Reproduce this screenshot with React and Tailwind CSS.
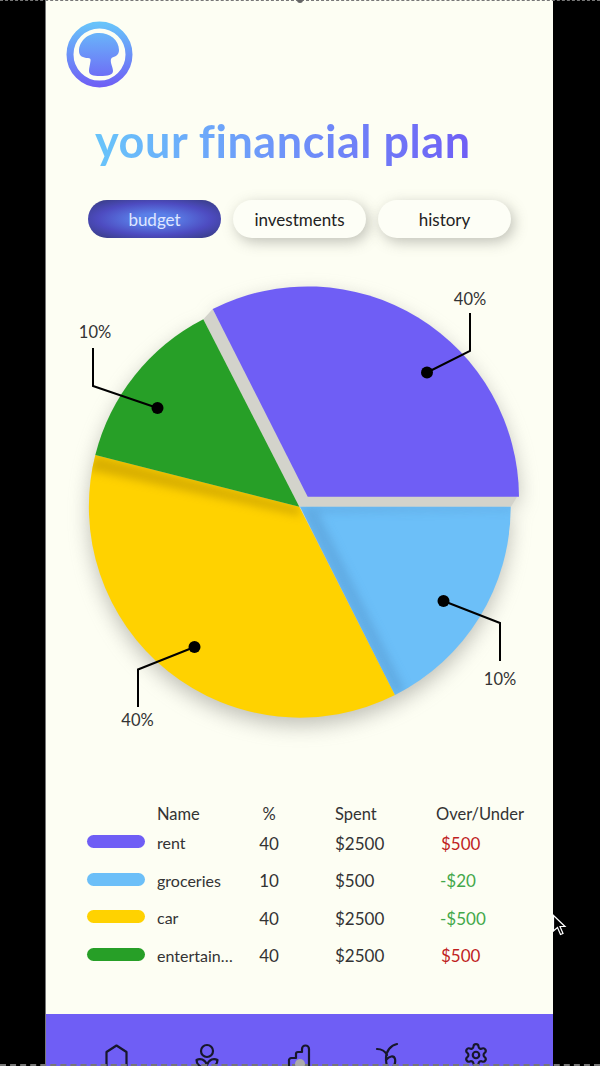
import React from "react";
import { Settings } from "lucide-react";

const PURPLE = "M307.7 496.7 L519 496.7 A211.3 211.3 0 0 0 212.7 309 Z";
const GREEN = "M299.3 506.7 L203.3 319.3 A210.6 210.6 0 0 0 95.3 455 Z";
const YELLOW = "M299.3 506.7 L95.3 455 A211 211 0 0 0 395 695 Z";
const BLUE = "M300 506.7 L510.7 506.7 A210.7 210.7 0 0 1 395 695 Z";

function Pie() {
  return (
    <svg width="508" height="500" viewBox="45 260 508 500" className="block">
      <defs>
        <filter id="b10" x="-30%" y="-30%" width="160%" height="160%"><feGaussianBlur stdDeviation="10" /></filter>
        <filter id="b4" x="-30%" y="-30%" width="160%" height="160%"><feGaussianBlur stdDeviation="4" /></filter>
        <clipPath id="cy"><path d={YELLOW} /></clipPath>
        <clipPath id="cb"><path d={BLUE} /></clipPath>
      </defs>
      <g fill="#8f8f88" opacity="0.55" filter="url(#b10)" transform="translate(0 8)">
        <path d={PURPLE} /><path d={GREEN} /><path d={YELLOW} /><path d={BLUE} />
      </g>
      <path d="M299.3 506.7 L203.3 319.3 L212.700 309 L307.700 496.700 L517 496.700 L511 506.700 Z" fill="#d3d3cb" />
      <path d={YELLOW} fill="#ffd200" />
      <g clipPath="url(#cy)">
        <path d="M299.3 506.7 L95.3 455 L88 470 L300 516 Z" fill="#c9a100" opacity="0.7" filter="url(#b4)" />
      </g>
      <path d={BLUE} fill="#6cbff8" />
      <g clipPath="url(#cb)">
        <path d="M300 506.7 L512 506.7 L512 510 L318 512 L405 690 L395 695 Z" fill="#5a9fd6" opacity="0.6" filter="url(#b4)" />
      </g>
      <path d={GREEN} fill="#279f27" />
      <path d={PURPLE} fill="#6f5ef5" />
      <g fill="none" stroke="#000" strokeWidth="2">
        <path d="M427 372.5 L470 351 L470 313" />
        <path d="M157.5 408 L93 386 L93 348" />
        <path d="M443.5 601 L500 623 L500 661" />
        <path d="M194.5 647 L138 669.500 L138 707" />
      </g>
      <g fill="#000">
        <circle cx="427" cy="372.500" r="6" />
        <circle cx="157.500" cy="408" r="6" />
        <circle cx="443.500" cy="601" r="6" />
        <circle cx="194.500" cy="647" r="6" />
      </g>
      <g fill="#333" fontSize="16.5" textAnchor="middle" fontFamily="Lato, sans-serif">
        <text x="470" y="305">40%</text>
        <text x="95" y="338">10%</text>
        <text x="500" y="685">10%</text>
        <text x="137.500" y="726">40%</text>
      </g>
    </svg>
  );
}

function Logo() {
  return (
    <svg width="68" height="68" viewBox="0 0 68 68" className="block">
      <defs>
        <linearGradient id="lg" gradientUnits="userSpaceOnUse" x1="0" y1="2" x2="0" y2="66">
          <stop offset="0" stopColor="#68c4fa" />
          <stop offset="1" stopColor="#6f5ef5" />
        </linearGradient>
      </defs>
      <circle cx="33.500" cy="33.500" r="29.500" fill="none" stroke="url(#lg)" strokeWidth="7" />
      <path
        d="M33 12 C22 12 13 20 13 30 C13 35 17 37 22 37 C24 37 25 38 24.500 40 C24 44 23 47 23 50 C23 54 27 55 34 55 C42 55 47 54 47 50 C47 46 44 42 45 38 C46 36 48 36 49 35.500 C52 34 53 32 53 29 C53 19 44 12 33 12 Z"
        fill="url(#lg)"
      />
    </svg>
  );
}

const Ic = ({ children }) => (
  <svg width="26" height="26" viewBox="0 0 26 26" fill="none" stroke="#17172b" strokeWidth="2.200" strokeLinecap="round" strokeLinejoin="round" className="block overflow-visible">
    {children}
  </svg>
);

function Row({ swatch, name, pct, spent, diff, tone }) {
  return (
    <div className="grid grid-cols-[70px_101px_77px_101px_1fr] items-center h-[37.500px]">
      <div className={`w-[58px] h-[13px] rounded-full ${swatch}`} />
      <div className="pt-[3px] text-[16px] text-[#333]">{name}</div>
      <div className="pt-[3px] text-[17px] text-[#333] w-[22px] text-center">{pct}</div>
      <div className="pt-[3px] text-[17px] text-[#333]">{spent}</div>
      <div className={`pt-[3px] text-[17px] ${tone}`}>{diff}</div>
    </div>
  );
}

export default function App() {
  return (
    <div className="relative w-[600px] h-[1066px] overflow-hidden bg-black font-['Lato',sans-serif]">
      <div className="ml-[45px] w-[508px] h-[1066px] flex flex-col bg-[#fdfef3] border-l border-[#777]">
        <div className="pl-[20px] pt-[21px]"><Logo /></div>
        <h1 className="mt-[24px] ml-[49px] w-fit text-[45px] leading-[56px] font-bold tracking-[0.55px] whitespace-nowrap text-transparent bg-clip-text bg-gradient-to-r from-[#68c4fa] to-[#6f5ef5]">
          your financial plan
        </h1>
        <div className="mt-[31px] ml-[42px] flex gap-[12px]">
          <div className="w-[133px] h-[38px] pt-[2px] rounded-full flex items-center justify-center text-[17px] text-[#dfe6ff] bg-[radial-gradient(ellipse_at_center,#5a7fe8_20%,#4d4bc0_60%,#343a78_100%)]">budget</div>
          <div className="w-[133px] h-[38px] pt-[2px] rounded-full flex items-center justify-center text-[17px] text-[#222] bg-[#fdfef6] shadow-[3px_4px_14px_rgba(120,120,110,0.45)]">investments</div>
          <div className="w-[133px] h-[38px] pt-[2px] rounded-full flex items-center justify-center text-[17px] text-[#222] bg-[#fdfef6] shadow-[3px_4px_14px_rgba(120,120,110,0.45)]">history</div>
        </div>
        <div className="mt-[22px] -ml-px"><Pie /></div>
        <div className="mt-[42px] ml-[41px] flex flex-col">
          <div className="grid grid-cols-[70px_101px_77px_101px_1fr] h-[21px] items-start text-[16.500px] leading-[24px] text-[#333]">
            <div />
            <div>Name</div>
            <div className="w-[22px] text-center">%</div>
            <div>Spent</div>
            <div>Over/Under</div>
          </div>
          <Row swatch="bg-[#6f5ef5]" name="rent" pct="40" spent="$2500" diff={<span className="ml-[5px]">$500</span>} tone="text-[#c01f1f]" />
          <Row swatch="bg-[#6cbff8]" name="groceries" pct="10" spent="$500" diff={<span className="ml-[4px]">-$20</span>} tone="text-[#43a84a]" />
          <Row swatch="bg-[#ffd200]" name="car" pct="40" spent="$2500" diff={<span className="ml-[4px]">-$500</span>} tone="text-[#43a84a]" />
          <Row swatch="bg-[#279f27]" name="entertain…" pct="40" spent="$2500" diff={<span className="ml-[5px]">$500</span>} tone="text-[#c01f1f]" />
        </div>
        <div className="mt-auto h-[52px] bg-[#6f5ef5] overflow-hidden">
          <div className="flex pl-[57px] pt-[30px] gap-[65px]">
            <Ic><path d="M3.500 30 V8 L13.500 1.500 L23.500 8 V30" /></Ic>
            <Ic><circle cx="13" cy="7" r="6" /><path d="M13 21 C11 15 6 14 2.500 16 C2.500 21 7 24 13 24 C19 24 23.500 21 23.500 16 C20 14 15 15 13 21" /></Ic>
            <Ic><path d="M4 30 V17 a2.500 2.500 0 0 1 2.500 -3 H11 V10 a2 2 0 0 1 2 -2 H17 V5 a3 3 0 0 1 7 0 V30" /></Ic>
            <Ic><path d="M1 5 C5 5 9 7 11 11 M21 0 C15 1 10 7 10 14 C10 19 11 23 13 24 C17 25 20 20 19 15 C18 11 13 12 10 16" /></Ic>
            <div className="-ml-[4px] -mt-[2px]"><Settings size={26} color="#17172b" strokeWidth={2} /></div>
          </div>
        </div>
      </div>
      <div className="absolute left-0 right-0 top-0 h-px border-t border-dashed border-[#777]" />
      <div className="absolute left-0 right-0 bottom-0 h-[2px] border-t-2 border-dashed border-[#777]" />
      <div className="absolute left-[297px] top-[-3px] w-[6px] h-[6px] rounded-full bg-[#666]" />
      <div className="absolute left-[295px] bottom-[-3px] w-[10px] h-[10px] rounded-full bg-[#aaa]" />
      <svg width="16" height="24" viewBox="0 0 16 24" className="absolute left-[552px] top-[914px]">
        <path d="M1.500 1.500 L1.500 17 L5.500 13.500 L8.500 20.500 L11 19.500 L8 12.500 L13 12.500 Z" fill="#000" stroke="#fff" strokeWidth="1.200" />
      </svg>
    </div>
  );
}
